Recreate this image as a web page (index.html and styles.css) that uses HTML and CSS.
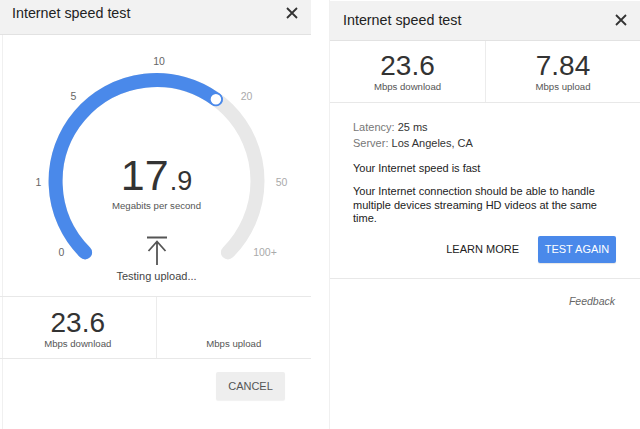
FILE: index.html
```html
<!DOCTYPE html>
<html>
<head>
<meta charset="utf-8">
<link rel="stylesheet" href="styles.css">
</head>
<body>
<div class="page">
  <section class="panel panel-left">
    <header class="head head-left">
      <span class="title">Internet speed test</span>
      <svg class="close" viewBox="0 0 12 12" width="12" height="12"><path d="M1 1L11 11M11 1L1 11" stroke="#333" stroke-width="1.8" fill="none"/></svg>
    </header>
    <div class="gauge">
      <svg class="gauge-svg" width="311" height="261" viewBox="0 35 311 261">
        <path d="M 82.1 252.4 A 101 101 0 1 1 224.9 252.4" fill="none" stroke="#e8e8e8" stroke-width="14" stroke-linecap="round"/>
        <path d="M 82.1 252.4 A 101 101 0 0 1 212.9 99.3" fill="none" stroke="#4a89ea" stroke-width="14" stroke-linecap="round"/>
        <circle cx="212.9" cy="99.3" r="6" fill="#fff" stroke="#4a89ea" stroke-width="1.5"/>
        <g class="ticks">
          <text x="58.5" y="252" class="tick on">0</text>
          <text x="35.5" y="182" class="tick on">1</text>
          <text x="70.5" y="96" class="tick on">5</text>
          <text x="156" y="61" class="tick on">10</text>
          <text x="243.5" y="96" class="tick off">20</text>
          <text x="278.5" y="182" class="tick off">50</text>
          <text x="262" y="252" class="tick off">100+</text>
        </g>
      </svg>
      <div class="readout">
        <div class="value"><span class="int">17</span><span class="dec">.9</span></div>
        <div class="unit">Megabits per second</div>
        <svg class="up-icon" width="24" height="30" viewBox="0 0 24 30"><path d="M2 1.5H22M12 5V29M3.5 15L12 5.5L20.5 15" stroke="#555" stroke-width="1.8" fill="none"/></svg>
        <div class="status">Testing upload...</div>
      </div>
    </div>
    <div class="stats stats-left">
      <div class="cell"><div class="num">23.6</div><div class="lbl">Mbps download</div></div>
      <div class="cell"><div class="num empty"></div><div class="lbl">Mbps upload</div></div>
    </div>
    <div class="actions-left">
      <button class="btn-cancel">CANCEL</button>
    </div>
  </section>

  <section class="panel panel-right">
    <header class="head head-right">
      <span class="title">Internet speed test</span>
      <svg class="close" viewBox="0 0 12 12" width="12" height="12"><path d="M1 1L11 11M11 1L1 11" stroke="#333" stroke-width="1.8" fill="none"/></svg>
    </header>
    <div class="stats stats-right">
      <div class="cell"><div class="num">23.6</div><div class="lbl">Mbps download</div></div>
      <div class="cell"><div class="num">7.84</div><div class="lbl">Mbps upload</div></div>
    </div>
    <div class="details">
      <div class="meta"><span class="key">Latency:</span> 25 ms</div>
      <div class="meta"><span class="key">Server:</span> Los Angeles, CA</div>
      <div class="verdict">Your Internet speed is fast</div>
      <p class="desc">Your Internet connection should be able to handle multiple devices streaming HD videos at the same time.</p>
      <div class="actions-right">
        <button class="btn-flat">LEARN MORE</button>
        <button class="btn-blue">TEST AGAIN</button>
      </div>
    </div>
    <div class="feedback-row"><span class="feedback">Feedback</span></div>
  </section>
</div>
</body>
</html>
```

FILE: styles.css
```css
* { box-sizing: border-box; }
html, body { margin: 0; padding: 0; background: #fff; }
body {
  font-family: "Liberation Sans", Arial, sans-serif;
  color: #222;
  width: 640px;
  height: 429px;
  overflow: hidden;
}
.page {
  display: flex;
  gap: 18px;
  align-items: stretch;
  height: 429px;
}
.panel {
  width: 311px;
  flex: none;
  display: flex;
  flex-direction: column;
}
.panel-left { border-left: 1px solid #f0f0f0; margin-left: 2px; width: 309px; }
.panel-right { border-left: 1px solid #f0f0f0; }

.head {
  background: #f2f2f2;
  border-bottom: 1px solid #e2e2e2;
  display: flex;
  align-items: center;
  justify-content: space-between;
  flex: none;
}
.head .title { font-size: 14.3px; color: #222; }
.head-left {
  height: 35px;
  margin-left: -3px;
  padding: 0 13px 8px 12px;
}
.head-right {
  height: 40px;
  margin-top: 1px;
  padding: 0 13px 2px 13px;
}
.close { display: block; }

.gauge {
  position: relative;
  height: 261px;
  flex: none;
}
.gauge-svg { display: block; }
.tick {
  font-family: "Liberation Sans", Arial, sans-serif;
  font-size: 10.5px;
  text-anchor: middle;
  dominant-baseline: central;
}
.tick.on { fill: #666; }
.tick.off { fill: #aaa; }

.readout {
  position: absolute;
  left: 0;
  width: 311px;
  top: 119px;
  display: flex;
  flex-direction: column;
  align-items: center;
  margin-left: -2px;
}
.value {
  color: #333;
  line-height: 1;
  white-space: nowrap;
}
.value .int { font-size: 43px; }
.value .dec { font-size: 27px; margin-left: 1px; }
.unit { font-size: 9.6px; color: #555; margin-top: 3px; }
.up-icon { display: block; margin-top: 25px; }
.status { font-size: 11px; color: #444; margin-top: 4px; }

.stats {
  display: grid;
  grid-template-columns: 1fr 1fr;
  border-bottom: 1px solid #e8e8e8;
  flex: none;
}
.stats-left { border-top: 1px solid #e8e8e8; height: 63px; margin-left: -3px; }
.stats-right { height: 62px; }
.cell {
  display: flex;
  flex-direction: column;
  align-items: center;
  justify-content: center;
}
.cell + .cell { border-left: 1px solid #ececec; }
.num { font-size: 28px; color: #333; line-height: 1; height: 28px; }
.lbl { font-size: 9.6px; color: #555; margin-top: 1px; }
.stats-left .cell { padding-top: 2px; }
.stats-right .cell { padding-top: 0; }

.actions-left {
  display: flex;
  justify-content: flex-end;
  padding: 13px 26px 0 0;
}
.btn-cancel {
  font-family: "Liberation Sans", Arial, sans-serif;
  font-size: 11px;
  color: #555;
  background: #eeeeee;
  border: none;
  border-radius: 2px;
  width: 69px;
  height: 28px;
  padding: 0;
  box-shadow: 0 1px 1px rgba(0,0,0,0.06);
}

.details {
  padding: 16px 24px 15px 23px;
  border-bottom: 1px solid #e8e8e8;
  font-size: 11px;
}
.meta { line-height: 16px; color: #333; }
.meta .key { color: #777; }
.verdict { line-height: 16px; margin-top: 9px; color: #222; }
.desc { margin: 9px 0 0; line-height: 13.5px; color: #222; }
.actions-right {
  display: flex;
  justify-content: flex-end;
  align-items: center;
  gap: 11px;
  margin-top: 10px;
}
.btn-flat, .btn-blue {
  font-family: "Liberation Sans", Arial, sans-serif;
  font-size: 11px;
  border: none;
  border-radius: 2px;
  height: 27px;
  padding: 0 8px;
}
.btn-flat { background: transparent; color: #222; }
.btn-blue { background: #4a89ea; color: #fff; width: 78px; padding: 0; box-shadow: 0 1px 1px rgba(0,0,0,0.1); }

.feedback-row {
  display: flex;
  justify-content: flex-end;
  padding: 16px 25px 0 0;
}
.feedback { font-size: 10.5px; font-style: italic; color: #666; }
```
